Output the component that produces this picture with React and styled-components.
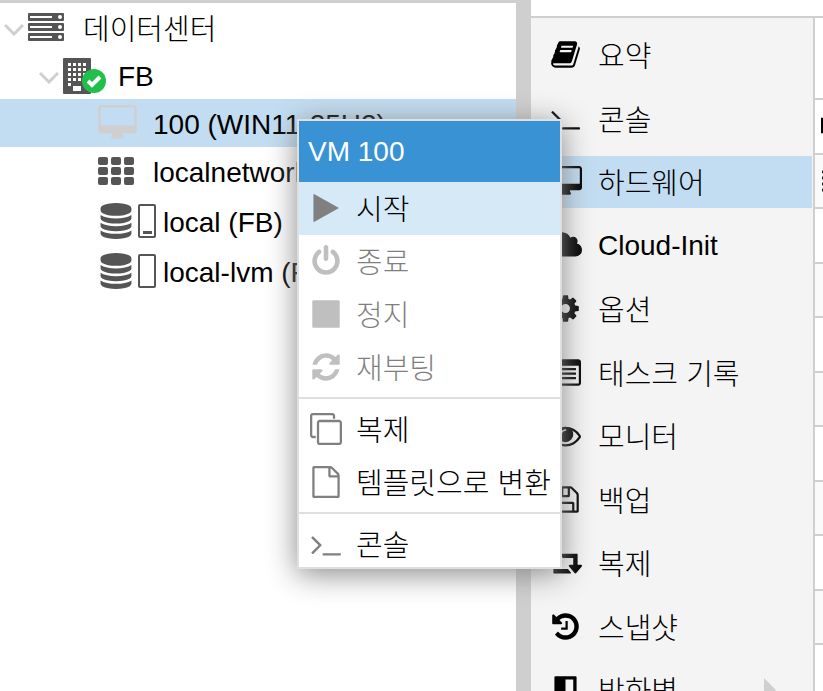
import React from 'react';
import styled, { createGlobalStyle } from 'styled-components';

const GlobalStyle = createGlobalStyle`
  * {
    box-sizing: border-box;
  }

  body {
    margin: 0;
    background: #fff;
    color: #000;
    font-family: 'Liberation Sans', 'Noto Sans CJK KR', sans-serif;
    font-size: 28px;
    overflow: hidden;
  }
`;

// glyphs on a 1792 unit em, [width, path]
const glyphs = {
  desktop: [1920, 'M1792 992v-832q0-13-9.5-22.5t-22.5-9.5h-1600q-13 0-22.5 9.5t-9.5 22.5v832q0 13 9.5 22.5t22.5 9.5h1600q13 0 22.5-9.5t9.5-22.5zm128-832v1088q0 66-47 113t-113 47h-544q0 37 16 77.5t32 71 16 43.5q0 26-19 45t-45 19h-512q-26 0-45-19t-19-45q0-14 16-44t32-70 16-78h-544q-66 0-113-47t-47-113v-1088q0-66 47-113t113-47h1600q66 0 113 47t47 113z'],
  database: [1792, 'M896 768q237 0 443-43t325-127v170q0 69-103 128t-280 93.5-385 34.5-385-34.5-280-93.5-103-128v-170q119 84 325 127t443 43zm0 768q237 0 443-43t325-127v170q0 69-103 128t-280 93.5-385 34.5-385-34.5-280-93.5-103-128v-170q119 84 325 127t443 43zm0-384q237 0 443-43t325-127v170q0 69-103 128t-280 93.5-385 34.5-385-34.5-280-93.5-103-128v-170q119 84 325 127t443 43zm0-1152q208 0 385 34.5t280 93.5 103 128v128q0 69-103 128t-280 93.5-385 34.5-385-34.5-280-93.5-103-128v-128q0-69 103-128t280-93.5 385-34.5z'],
  play: [1792, 'M1576 927l-1328 738q-23 13-39.5 3t-16.5-36v-1472q0-26 16.5-36t39.5 3l1328 738q23 13 23 31t-23 31z'],
  power: [1792, 'M1664 896q0 156-61 298t-164 245-245 164-298 61-298-61-245-164-164-245-61-298q0-182 80.5-343t226.5-270q43-32 95.5-25t83.5 50q32 42 24.5 94.5t-49.5 84.5q-98 74-151.5 181t-53.5 228q0 104 40.5 198.5t109.5 163.5 163.5 109.5 198.5 40.5 198.5-40.5 163.5-109.5 109.5-163.5 40.5-198.5q0-121-53.5-228t-151.5-181q-42-32-49.5-84.5t24.5-94.5q31-43 84-50t95 25q146 109 226.5 270t80.5 343zm-640-768v640q0 52-38 90t-90 38-90-38-38-90v-640q0-52 38-90t90-38 90 38 38 90z'],
  stop: [1792, 'M1664 192v1408q0 26-19 45t-45 19h-1408q-26 0-45-19t-19-45v-1408q0-26 19-45t45-19h1408q26 0 45 19t19 45z'],
  refresh: [1792, 'M1639 1056q0 5-1 7-64 268-268 434.5t-478 166.5q-146 0-282.5-55t-243.5-157l-129 129q-19 19-45 19t-45-19-19-45v-448q0-26 19-45t45-19h448q26 0 45 19t19 45-19 45l-137 137q71 66 161 102t187 36q134 0 250-65t186-179q11-17 53-117 8-23 30-23h192q13 0 22.5 9.5t9.5 22.5zm25-800v448q0 26-19 45t-45 19h-448q-26 0-45-19t-19-45 19-45l138-138q-148-137-349-137-134 0-250 65t-186 179q-11 17-53 117-8 23-30 23h-199q-13 0-22.5-9.5t-9.5-22.5v-7q65-268 270-434.5t480-166.5q146 0 284 55.5t245 156.5l130-129q19-19 45-19t45 19 19 45z'],
  clone: [1792, 'M1664 1632v-1088q0-13-9.5-22.5t-22.5-9.5h-1088q-13 0-22.5 9.5t-9.5 22.5v1088q0 13 9.5 22.5t22.5 9.5h1088q13 0 22.5-9.5t9.5-22.5zm128-1088v1088q0 66-47 113t-113 47h-1088q-66 0-113-47t-47-113v-1088q0-66 47-113t113-47h1088q66 0 113 47t47 113zm-384-384v160h-128v-160q0-13-9.5-22.5t-22.5-9.5h-1088q-13 0-22.5 9.5t-9.5 22.5v1088q0 13 9.5 22.5t22.5 9.5h160v128h-160q-66 0-113-47t-47-113v-1088q0-66 47-113t113-47h1088q66 0 113 47t47 113z'],
  file: [1792, 'M1596 380q28 28 48 76t20 88v1152q0 40-28 68t-68 28h-1344q-40 0-68-28t-28-68v-1600q0-40 28-68t68-28h896q40 0 88 20t76 48zm-444-244v376h376q-10-29-22-41l-313-313q-12-12-41-22zm384 1528v-1024h-416q-40 0-68-28t-28-68v-416h-768v1536h1280z'],
  terminal: [1792, 'M649 983l-466 466q-10 10-23 10t-23-10l-50-50q-10-10-10-23t10-23l393-393-393-393q-10-10-10-23t10-23l50-50q10-10 23-10t23 10l466 466q10 10 10 23t-10 23zm1079 457v64q0 14-9 23t-23 9h-960q-14 0-23-9t-9-23v-64q0-14 9-23t23-9h960q14 0 23 9t9 23z'],
  book: [1792, 'M1703 478q40 57 18 129l-275 906q-19 64-76.5 107.5t-122.5 43.5h-923q-77 0-148.5-53.5t-99.5-131.5q-24-67-2-127 0-4 3-27t4-37q1-8-3-21.5t-3-19.5q2-11 8-21t16.5-23.5 16.5-23.5q23-38 45-91.5t30-91.5q3-10 .5-30t-.5-28q3-11 17-28t17-23q21-36 42-92t25-90q1-9-2.5-32t.5-28q4-13 22-30.5t22-22.5q19-26 42.5-84.5t27.5-96.5q1-8-3-25.5t-2-26.5q2-8 9-18t18-23 17-21q8-12 16.5-30.5t15-35 16-36 19.5-32 26.5-23.5 36-11.5 47.5 5.5l-1 3q38-9 51-9h761q74 0 114 56t18 130l-274 906q-36 119-71.5 153.5t-128.5 34.5h-869q-27 0-38 15-11 16-1 43 24 70 144 70h923q29 0 56-15.5t35-41.5l300-987q7-22 5-57 38 15 59 43zm-1064 2q-4 13 2 22.5t20 9.5h608q13 0 25.5-9.5t16.5-22.5l21-64q4-13-2-22.5t-20-9.5h-608q-13 0-25.5 9.5t-16.5 22.5zm-83 256q-4 13 2 22.5t20 9.5h608q13 0 25.5-9.5t16.5-22.5l21-64q4-13-2-22.5t-20-9.5h-608q-13 0-25.5 9.5t-16.5 22.5z'],
  cloud: [1920, 'M1920 1152q0 159-112.5 271.5t-271.5 112.5h-1088q-185 0-316.5-131.5t-131.5-316.5q0-132 71-241.5t187-163.5q-2-28-2-43 0-212 150-362t362-150q158 0 286.5 88t187.5 230q70-62 166-62 106 0 181 75t75 181q0 75-41 138 129 30 213 134.5t84 239.5z'],
  cog: [1792, 'M1152 896q0-106-75-181t-181-75-181 75-75 181 75 181 181 75 181-75 75-181zm512-109v222q0 12-8 23t-20 13l-185 28q-19 54-39 91 35 50 107 138 10 12 10 25t-9 23q-27 37-99 108t-94 71q-12 0-26-9l-138-108q-44 23-91 38-16 136-29 186-7 28-36 28h-222q-14 0-24.5-8.5t-11.5-21.5l-28-184q-49-16-90-37l-141 107q-10 9-25 9-14 0-25-11-126-114-165-168-7-10-7-23 0-12 8-23 15-21 51-66.5t54-70.5q-27-50-41-99l-183-27q-13-2-21-12.5t-8-23.5v-222q0-12 8-23t19-13l186-28q14-46 39-92-40-57-107-138-10-12-10-24 0-10 9-23 26-36 98.5-107.5t94.5-71.5q13 0 26 10l138 107q44-23 91-38 16-136 29-186 7-28 36-28h222q14 0 24.5 8.5t11.5 21.5l28 184q49 16 90 37l142-107q9-9 24-9 13 0 25 10 129 119 165 170 7 8 7 22 0 12-8 23-15 21-51 66.5t-54 70.5q26 50 41 98l183 28q13 2 21 12.5t8 23.5z'],
  list: [1792, 'M160 128h1472q66 0 113 47t47 113v1216q0 66-47 113t-113 47h-1472q-66 0-113-47t-47-113v-1216q0-66 47-113t113-47zM128 512v992q0 32 32 32h1472q32 0 32-32v-992zM256 640h1216q32 0 32 32v64q0 32-32 32h-1216zM256 896h1216q32 0 32 32v64q0 32-32 32h-1216zM256 1152h1216q32 0 32 32v64q0 32-32 32h-1216z'],
  eye: [1792, 'M1664 960q-152-236-381-353 61 104 61 225 0 185-131.5 316.5t-316.5 131.5-316.5-131.5-131.5-316.5q0-121 61-225-229 117-381 353 133 205 333.5 326.5t434.5 121.5 434.5-121.5 333.5-326.5zm-720-384q0-20-14-34t-34-14q-125 0-214.5 89.5t-89.5 214.5q0 20 14 34t34 14 34-14 14-34q0-86 61-147t147-61q20 0 34-14t14-34zm848 384q0 34-20 69-140 230-376.5 368.5t-499.5 138.5-499.5-139-376.5-368q-20-35-20-69t20-69q140-229 376.5-368t499.5-139 499.5 139 376.5 368q20 35 20 69z'],
  floppy: [1792, 'M512 1536h768v-384h-768v384zm896 0h128v-896q0-14-10-38.5t-20-34.5l-281-281q-10-10-34-20t-39-10v416q0 40-28 68t-68 28h-576q-40 0-68-28t-28-68v-416h-128v1280h128v-416q0-40 28-68t68-28h832q40 0 68 28t28 68v416zm-384-928v-320q0-13-9.5-22.5t-22.5-9.5h-192q-13 0-22.5 9.5t-9.5 22.5v320q0 13 9.5 22.5t22.5 9.5h192q13 0 22.5-9.5t9.5-22.5zm640 32v928q0 40-28 68t-68 28h-1344q-40 0-68-28t-28-68v-1344q0-40 28-68t68-28h928q40 0 88 20t76 48l280 280q28 28 48 76t20 88z'],
  retweet: [1920, 'M1280 1504q0 13-9.5 22.5t-22.5 9.5h-960q-8 0-13.5-2t-9-7-5.5-8-3-11.5-1-11.5v-600h-192q-26 0-45-19t-19-45q0-24 15-41l320-384q19-22 49-22t49 22l320 384q15 17 15 41 0 26-19 45t-45 19h-192v384h576q16 0 25 11l160 192q7 10 7 21zm640-416q0 24-15 41l-320 384q-20 23-49 23t-49-23l-320-384q-15-17-15-41 0-26 19-45t45-19h192v-384h-576q-16 0-25-12l-160-192q-7-9-7-20 0-13 9.5-22.5t22.5-9.5h960q8 0 13.5 2t9 7 5.5 8 3 11.5 1 11.5v600h192q26 0 45 19t19 45z'],
  history: [1792, 'M1664 896q0 156-61 298t-164 245-245 164-298 61q-172 0-327-72.5t-264-204.5q-7-10-6.5-22.5t8.5-20.5l137-138q10-9 25-9 16 2 23 12 73 95 179 147t225 52q104 0 198.5-40.5t163.5-109.5 109.5-163.5 40.5-198.5-40.5-198.5-109.5-163.5-163.5-109.5-198.5-40.5q-98 0-188 35.5t-160 101.5l137 138q31 30 14 69-17 40-59 40h-448q-26 0-45-19t-19-45v-448q0-42 40-59 39-17 69 14l130 129q107-101 244.5-156.5t284.5-55.5q156 0 298 61t245 164 164 245 61 298zm-640-288v448q0 14-9 23t-23 9h-320q-14 0-23-9t-9-23v-64q0-14 9-23t23-9h224v-352q0-14 9-23t23-9h64q14 0 23 9t9 23z'],
  shield: [1792, 'M1344 960v-640h-448v1137q119-63 213-137 235-184 235-360zm192-768v768q0 86-33.5 170.5t-83 150-118 127.5-126.5 103-121 77.5-89.5 49.5-42.5 20q-12 6-26 6t-26-6q-16-7-42.5-20t-89.5-49.5-121-77.5-126.5-103-118-127.5-83-150-33.5-170.5v-768q0-26 19-45t45-19h1152q26 0 45 19t19 45z'],
  memory: [1792, 'M0 384h1792v896h-1792zM256 512v384h256v-384zM768 512v384h256v-384zM1280 512v384h256v-384z'],
  chip: [1792, 'M320 128h1152v1536h-1152zM64 256h192v160h-192zM64 608h192v160h-192zM64 960h192v160h-192zM64 1312h192v160h-192zM1536 256h192v160h-192zM1536 608h192v160h-192zM1536 960h192v160h-192zM1536 1312h192v160h-192z'],
  disc: [1792, 'M896 128a768 768 0 1 0 0 1536a768 768 0 1 0 0-1536zM896 704a192 192 0 1 1 0 384a192 192 0 1 1 0-384z'],
};

const Glyph = ({ name, size }) => {
  const [width, d] = glyphs[name];
  return (
    <svg width={Math.round((size * width) / 1792)} height={size} viewBox={`0 0 ${width} 1792`} aria-hidden="true">
      <path fill="currentColor" fillRule="evenodd" d={d} />
    </svg>
  );
};

const Chevron = () => (
  <svg width="20" height="18" viewBox="0 0 20 18" aria-hidden="true">
    <path d="M1 7l9 9 9-9" fill="none" stroke="#cfcfcf" strokeWidth="3" />
  </svg>
);

const ServerIcon = () => (
  <svg width="36" height="28" viewBox="0 0 36 28" aria-hidden="true">
    {[0, 10, 20].map((y) => (
      <g key={y}>
        <rect y={y} width="36" height="8" rx="1" fill="#555" />
        <rect x="2" y={y + 3} width="22" height="2" fill="#fff" />
        <circle cx="32" cy={y + 4} r="2" fill="#fff" />
      </g>
    ))}
  </svg>
);

const BuildingIcon = () => (
  <svg width="44" height="38" viewBox="0 -2 44 38" aria-hidden="true">
    <rect width="28" height="36" rx="1" fill="#555" />
    {[5, 10, 15, 20].map((y) =>
      [5, 10, 15, 20].map((x) => (
        <rect key={`${x}-${y}`} x={x} y={y} width="3" height="3" fill="#fff" />
      ))
    )}
    <rect x="5" y="25" width="3" height="3" fill="#fff" />
    <rect x="10" y="28" width="8" height="5" fill="#fff" />
    <circle cx="31" cy="23" r="12" fill="#21bf4b" />
    <path d="M25 23l4 4 8-8" fill="none" stroke="#fff" strokeWidth="4" />
  </svg>
);

const GridIcon = () => (
  <svg width="36" height="28" viewBox="0 0 36 28" aria-hidden="true">
    {[0, 10, 20].map((y) =>
      [0, 13, 26].map((x) => (
        <rect key={`${x}-${y}`} x={x} y={y} width="10" height="8" rx="2" fill="#555" />
      ))
    )}
  </svg>
);

const UsageBar = ({ used }) => (
  <svg width="18" height="34" viewBox="0 0 18 34" aria-hidden="true">
    <rect x="1" y="1" width="16" height="32" rx="1" fill="#fff" stroke="#555" strokeWidth="2" />
    {used && <rect x="5" y="27" width="9" height="3" fill="#555" />}
  </svg>
);

const navItems = [
  ['book', '요약'],
  ['terminal', '콘솔'],
  ['desktop', '하드웨어'],
  ['cloud', 'Cloud-Init'],
  ['cog', '옵션'],
  ['list', '태스크 기록'],
  ['eye', '모니터'],
  ['floppy', '백업'],
  ['retweet', '복제'],
  ['history', '스냅샷'],
  ['shield', '방화벽'],
];

const menuGroups = [
  [
    { icon: 'play', label: '시작', active: true },
    { icon: 'power', label: '종료', disabled: true },
    { icon: 'stop', label: '정지', disabled: true },
    { icon: 'refresh', label: '재부팅', disabled: true },
  ],
  [
    { icon: 'clone', label: '복제' },
    { icon: 'file', label: '템플릿으로 변환' },
  ],
  [{ icon: 'terminal', label: '콘솔' }],
];

const hardware = [null, 'memory', 'chip', null, null, null, null, 'disc', 'disc', null, null, null];

const App = () => {
  return (
    <>
      <GlobalStyle />
      <Page>
        <TreePanel>
          <TreeRow $indent={4}>
            <Chevron />
            <ServerIcon />
            <TreeLabel lang="ko" $gap={19}>데이터센터</TreeLabel>
          </TreeRow>
          <TreeRow $indent={39}>
            <Chevron />
            <BuildingIcon />
            <TreeLabel $gap={11}>FB</TreeLabel>
          </TreeRow>
          <TreeRow $indent={98} $selected>
            <Faded><Glyph name="desktop" size={36} /></Faded>
            <TreeLabel $gap={16}>100 (WIN11-25H2)</TreeLabel>
          </TreeRow>
          <TreeRow $indent={98} $tall>
            <GridIcon />
            <TreeLabel $gap={19}>localnetwork (FB)</TreeLabel>
          </TreeRow>
          <TreeRow $indent={98} $tall>
            <Glyph name="database" size={36} />
            <UsageBar used />
            <TreeLabel $gap={7}>local (FB)</TreeLabel>
          </TreeRow>
          <TreeRow $indent={98} $tall>
            <Glyph name="database" size={36} />
            <UsageBar />
            <TreeLabel $gap={7}>local-lvm (FB)</TreeLabel>
          </TreeRow>
        </TreePanel>
        <Splitter />
        <Content>
          <Nav>
            {navItems.map(([icon, label]) => (
              <NavLink key={label} href="#" $selected={icon === 'desktop'}>
                <NavIcon><Glyph name={icon} size={31} /></NavIcon>
                <span lang={icon === 'cloud' ? 'en' : 'ko'}>{label}</span>
                {icon === 'shield' && <Expand />}
              </NavLink>
            ))}
          </Nav>
          <HardwarePanel>
            <Hardware>
              <tbody>
                {hardware.map((icon, i) => (
                  <tr key={i}>
                    <td>{icon && <Glyph name={icon} size={31} />}</td>
                  </tr>
                ))}
              </tbody>
            </Hardware>
          </HardwarePanel>
        </Content>
        <Menu>
          <MenuTitle>VM 100</MenuTitle>
          <MenuBody>
            {menuGroups.map((group, i) => (
              <MenuGroup key={i}>
                {group.map(({ icon, label, active, disabled }) => (
                  <MenuItem key={label} $active={active} disabled={disabled}>
                    <MenuIcon><Glyph name={icon} size={32} /></MenuIcon>
                    <span lang="ko">{label}</span>
                  </MenuItem>
                ))}
              </MenuGroup>
            ))}
          </MenuBody>
        </Menu>
      </Page>
    </>
  );
};

const Page = styled.div`
  position: relative;
  display: flex;
  height: 100vh;
  overflow: hidden;

  :lang(ko) {
    padding-bottom: 3px;
    font-family: 'Noto Sans CJK KR', sans-serif;
    font-size: 29px;
    font-weight: 300;
  }

  svg {
    display: block;
    flex: none;
  }
`;

const TreePanel = styled.div`
  flex: 516;
  min-width: 0;
  border-top: 3px solid #cfcfcf;
`;

const TreeRow = styled.div`
  display: flex;
  align-items: center;
  height: ${(p) => (p.$tall ? 50 : 48)}px;
  padding-left: ${(p) => p.$indent}px;
  padding-bottom: ${(p) => (p.$tall ? 2 : 0)}px;
  gap: 4px;
  background: ${(p) => (p.$selected ? '#c2ddf2' : 'transparent')};
  color: #555;
  white-space: nowrap;
`;

const TreeLabel = styled.span`
  margin-left: ${(p) => p.$gap - 4}px;
  padding-top: 3px;
  color: #000;
  line-height: 32px;
`;

const Faded = styled.span`
  color: #cfcfcf;
`;

const Splitter = styled.div`
  width: 15px;
  background: #cfcfcf;
`;

const Content = styled.div`
  flex: 292;
  display: flex;
  margin-top: 16px;
  border-top: 2px solid #cfcfcf;
  overflow: hidden;
`;

const Nav = styled.nav`
  flex: 1;
  height: 100%;
  padding-top: 11px;
  padding-right: 1px;
  background: #f4f4f4;
  overflow: hidden;
`;

const NavLink = styled.a`
  display: flex;
  align-items: center;
  height: 52px;
  margin-bottom: 12px;
  padding-left: 18px;
  background: ${(p) => (p.$selected ? '#c2ddf2' : 'transparent')};
  color: #000;
  line-height: 32px;
  text-decoration: none;

  &:nth-child(even) {
    margin-bottom: 11px;
  }
`;

const NavIcon = styled.span`
  display: flex;
  justify-content: center;
  width: 33px;
  margin-right: 16px;
  padding-bottom: 2px;
`;

const Expand = styled.span`
  margin-left: auto;
  margin-right: 36px;
  border: 12px solid transparent;
  border-left-color: #cfcfcf;
  border-right-width: 0;
`;

const HardwarePanel = styled.div`
  width: 10px;
  border-left: 2px solid #cfcfcf;
  overflow: hidden;
`;

const Hardware = styled.table`
  border-spacing: 0;

  td {
    height: 54px;
    padding: 0 6px;
    border-bottom: 2px solid #cfcfcf;
  }

  tr:nth-child(even) td {
    height: 55px;
  }

  tr:nth-child(odd) td {
    background: #fafafa;
  }

  tr:first-child td {
    height: 82px;
    background: #fff;
  }
`;

const Menu = styled.div`
  position: absolute;
  left: 297px;
  top: 119px;
  border: 2px solid #dfdfdf;
  background: #fff;
  box-shadow: #888 0 5px 28px;
`;

const MenuTitle = styled.div`
  padding: 15px 9px 14px;
  background: #3892d4;
  color: #fff;
  line-height: 32px;
`;

const MenuBody = styled.div`
  overflow: hidden;
`;

const MenuGroup = styled.div`
  & + & {
    margin-top: 3px;
    padding-top: 4px;
    border-top: 2px solid #dfdfdf;
  }

  &:last-child {
    margin-bottom: -4px;
  }
`;

const MenuItem = styled.button`
  display: flex;
  align-items: center;
  width: 100%;
  height: 53px;
  padding: 0 9px 0 10px;
  border: 0;
  background: ${(p) => (p.$active ? '#d6e9f6' : 'transparent')};
  color: #000;
  line-height: 32px;
  white-space: nowrap;

  &:disabled {
    opacity: 0.5;
  }
`;

const MenuIcon = styled.span`
  display: flex;
  justify-content: center;
  width: 33px;
  margin-right: 14px;
  padding-bottom: 2px;
  color: #808080;
`;

export default App;
